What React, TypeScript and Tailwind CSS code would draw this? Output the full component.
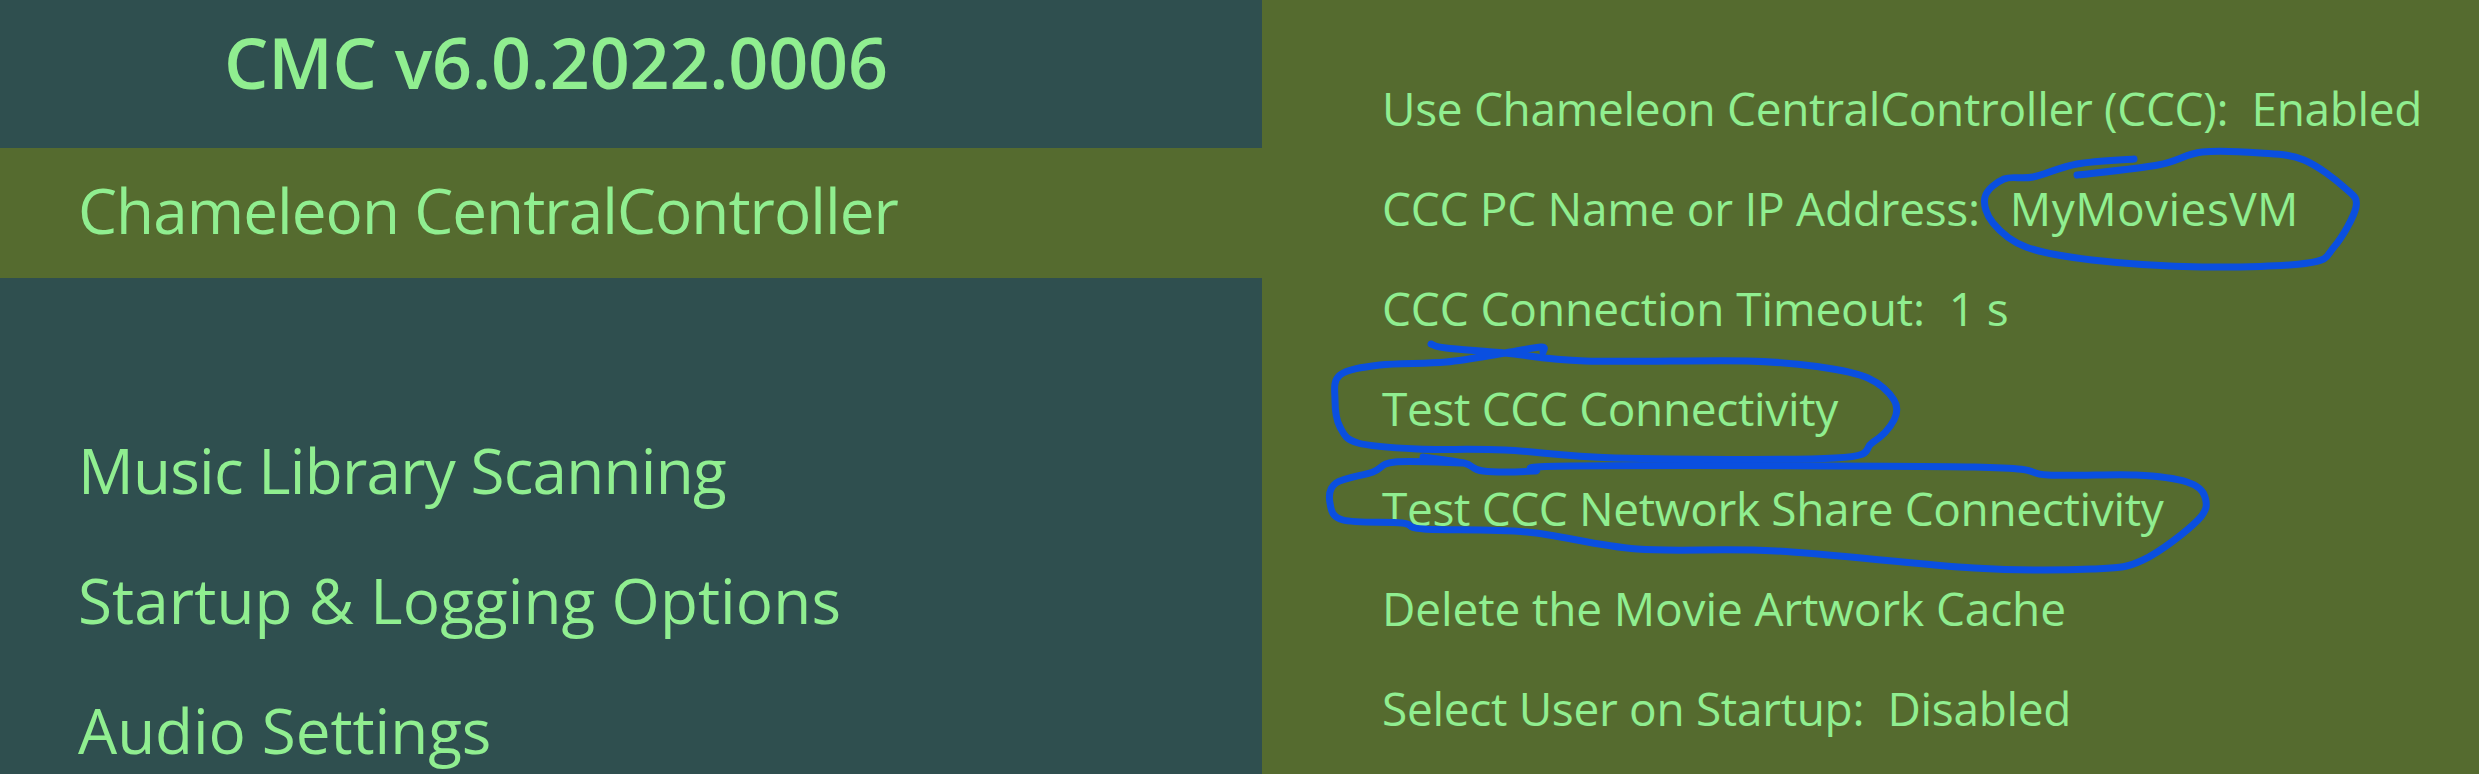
const menuItems = [
  { label: 'Music Library Scanning', tracking: 'tracking-[-0.76px]' },
  { label: 'Startup & Logging Options', tracking: 'tracking-[0.1px]' },
  { label: 'Audio Settings', tracking: 'tracking-[-0.06px]' },
];

const settings = [
  { label: 'Use Chameleon CentralController (CCC):  Enabled', tracking: 'tracking-[-0.33px]' },
  { label: 'CCC PC Name or IP Address:', value: 'MyMoviesVM', tracking: 'tracking-[-0.27px]' },
  { label: 'CCC Connection Timeout:  1 s', tracking: 'tracking-[-0.1px]' },
  { label: 'Test CCC Connectivity', tracking: 'tracking-[-0.35px]' },
  { label: 'Test CCC Network Share Connectivity', tracking: 'tracking-[-0.36px]' },
  { label: 'Delete the Movie Artwork Cache', tracking: 'tracking-[-0.13px]' },
  { label: 'Select User on Startup:  Disabled', tracking: 'tracking-[-0.32px]' },
];

type Pt = [number, number];

const inkStrokes: Pt[][] = [
  [[2134, 159], [2077, 164], [2033, 177], [2004, 179], [1985, 197], [1993, 223], [2026, 247], [2092, 260], [2202, 267], [2308, 263], [2334, 247], [2356, 207], [2345, 188], [2304, 160], [2260, 153], [2202, 152], [2158, 165], [2077, 175]],
  [[1431, 344], [1446, 348], [1505, 353], [1585, 361], [1747, 361], [1820, 367], [1868, 378], [1894, 400], [1894, 420], [1872, 443], [1835, 458], [1615, 458], [1505, 450], [1417, 449], [1358, 443], [1340, 427], [1335, 400], [1340, 375], [1380, 365], [1446, 362], [1505, 353], [1541, 347], [1543, 352]],
  [[1423, 457], [1464, 463], [1483, 471], [1534, 471], [1571, 466], [1974, 467], [2048, 475], [2136, 475], [2187, 482], [2205, 497], [2198, 520], [2143, 560], [2092, 569], [1974, 568], [1776, 551], [1637, 549], [1527, 532], [1424, 529], [1402, 523], [1343, 520], [1330, 503], [1336, 483], [1373, 472], [1395, 462], [1464, 463]],
];

// catmull-rom through the hand-drawn points
function toPath(pts: Pt[]) {
  let d = `M${pts[0][0]} ${pts[0][1]}`;
  for (let i = 0; i < pts.length - 1; i++) {
    const p0 = pts[Math.max(i - 1, 0)];
    const p1 = pts[i];
    const p2 = pts[i + 1];
    const p3 = pts[Math.min(i + 2, pts.length - 1)];
    const c1x = p1[0] + (p2[0] - p0[0]) / 6;
    const c1y = p1[1] + (p2[1] - p0[1]) / 6;
    const c2x = p2[0] - (p3[0] - p1[0]) / 6;
    const c2y = p2[1] - (p3[1] - p1[1]) / 6;
    d += ` C${c1x} ${c1y} ${c2x} ${c2y} ${p2[0]} ${p2[1]}`;
  }
  return d;
}

export default function App() {
  return (
    <div className="relative flex h-[774px] w-[2479px] overflow-hidden font-['Open_Sans','Noto_Sans',sans-serif] text-[#90ee90]">
      <aside className="w-[1262px] shrink-0 bg-[#2f4f4f]">
        <h1 className="flex h-[148px] items-start pt-[22px] pl-[224px] text-[70px] leading-[80px] font-semibold tracking-[-0.15px]">
          CMC v6.0.2022.0006
        </h1>
        <div className="flex h-[130px] items-center bg-[#556b2f] pb-[5px] pl-[78px] text-[62px] font-normal tracking-[-0.95px]">
          Chameleon CentralController
        </div>
        <div className="h-[130px]" />
        {menuItems.map((item) => (
          <div key={item.label} className={`flex h-[130px] items-center pb-[5px] pl-[78px] text-[62px] font-normal ${item.tracking}`}>
            {item.label}
          </div>
        ))}
      </aside>

      <main className="flex-1 bg-[#556b2f] pt-[59px] pl-[120px]">
        {settings.map((row) => (
          <div key={row.label} className={`flex h-[100px] items-center pb-[2px] text-[46px] font-normal whitespace-pre ${row.tracking}`}>
            {row.label}
            {row.value && <span className="ml-[30px] tracking-[0.45px]">{row.value}</span>}
          </div>
        ))}
      </main>

      <svg className="pointer-events-none absolute inset-0" width="2479" height="774" viewBox="0 0 2479 774" fill="none">
        {inkStrokes.map((pts, i) => (
          <path key={i} d={toPath(pts)} stroke="#0a4fe0" strokeWidth="7" strokeLinecap="round" strokeLinejoin="round" />
        ))}
      </svg>
    </div>
  );
}
